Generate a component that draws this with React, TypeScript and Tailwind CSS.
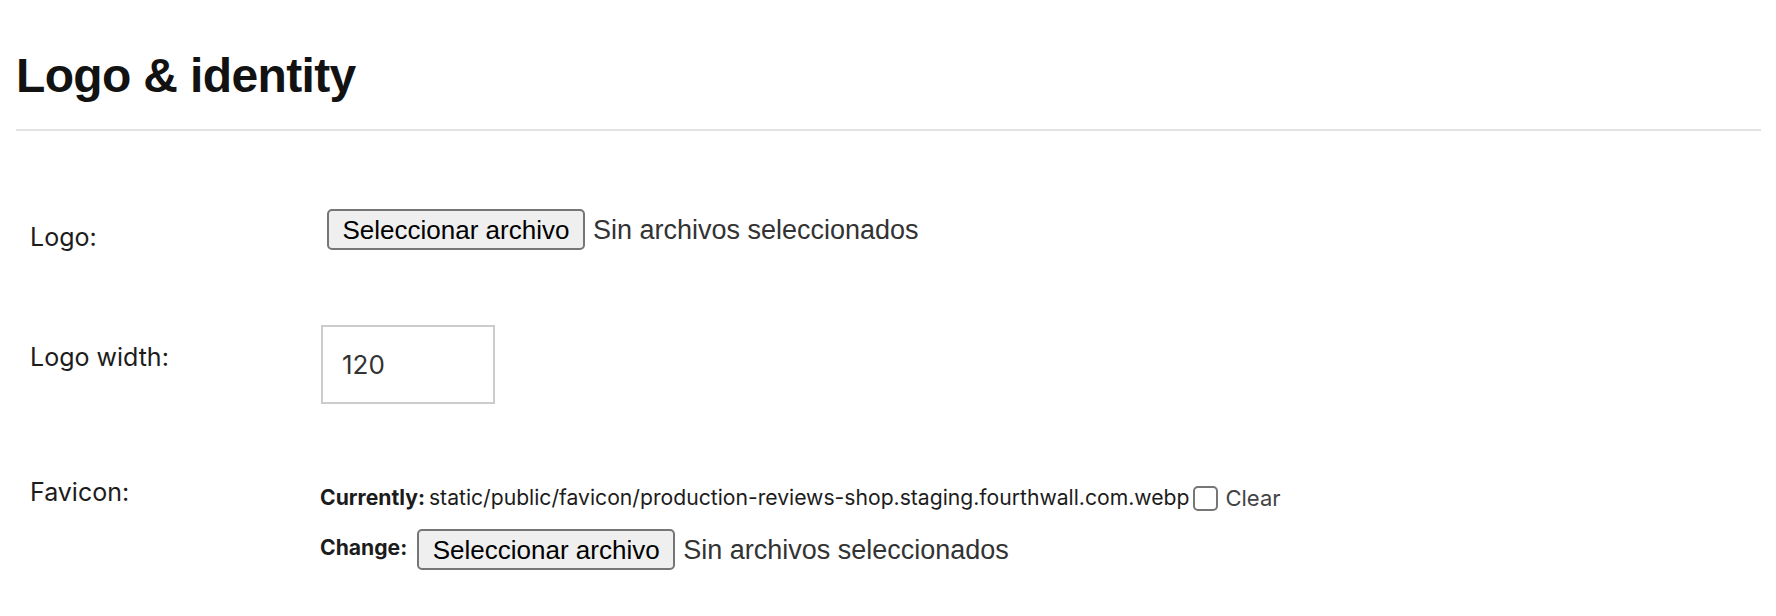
import React from "react";

function FileField() {
  return (
    <div className="flex items-center font-['Liberation_Sans',Arial,sans-serif]">
      <button
        type="button"
        className="h-[41px] px-[13.5px] rounded-[5px] border-2 border-[#767676] bg-[#efefef] text-[26px] leading-[30px] text-black"
      >
        Seleccionar archivo
      </button>
      <span className="ml-[8px] text-[27px] leading-[30px] text-[#333]">Sin archivos seleccionados</span>
    </div>
  );
}

export default function App() {
  return (
    <div className="min-h-[616px] bg-white pl-[16px] pr-[15px] font-['Inter',sans-serif] text-[#1c1c1c]">
      <h1 className="pt-[48px] pb-[26px] border-b-2 border-[#e2e2e2] font-['Liberation_Sans',Arial,sans-serif] text-[48px] leading-[55px] font-bold tracking-[-0.65px] text-[#121212]">
        Logo &amp; identity
      </h1>

      <div className="pl-[14px]">
        <div className="mt-[78px] flex">
          <div className="w-[290px] pt-[14px] text-[25px] leading-[29px]">Logo:</div>
          <div className="ml-[7px]">
            <FileField />
          </div>
        </div>

        <div className="mt-[73px] flex">
          <div className="w-[291px] pt-[18px] text-[25px] leading-[29px]">Logo width:</div>
          <div className="w-[174px] h-[79px] border-2 border-[#cccccc] flex items-center pl-[19px] text-[26px] text-[#333]">
            120
          </div>
        </div>

        <div className="mt-[74px] flex">
          <div className="w-[290px] text-[25px] leading-[29px]">Favicon:</div>
          <div>
            <div className="flex items-center pt-[7px] text-[21.15px] leading-[26px]">
              <span className="font-bold">Currently:</span>
              <span className="ml-[4px]">static/public/favicon/production-reviews-shop.staging.fourthwall.com.webp</span>
              <span className="ml-[4px] mr-[7px] inline-block w-[25px] h-[25px] rounded-[5px] border-2 border-[#767676] bg-white" />
              <span className="text-[22px] text-[#444]">Clear</span>
            </div>
            <div className="mt-[18px] flex items-start text-[21.15px] leading-[26px]">
              <span className="pt-[6px] font-bold">Change:</span>
              <div className="ml-[10px]">
                <FileField />
              </div>
            </div>
          </div>
        </div>
      </div>
    </div>
  );
}
